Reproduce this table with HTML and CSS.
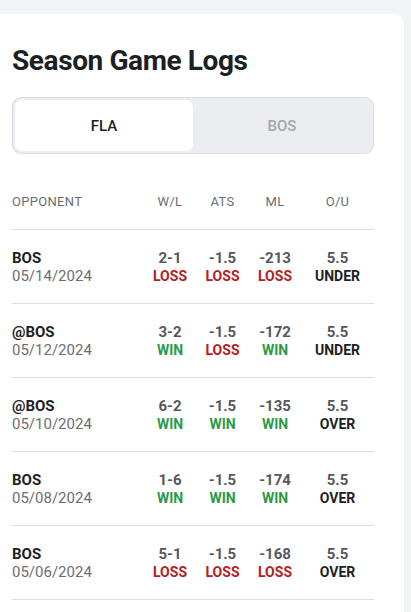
FILE: index.html
```html
<!DOCTYPE html>
<html lang="en">
<head>
<meta charset="utf-8">
<title>Season Game Logs</title>
<link rel="stylesheet" href="styles.css">
</head>
<body>
<div class="page">
  <section class="card">
    <h2 class="title">Season Game Logs</h2>
    <div class="tabs">
      <button class="tab active">FLA</button>
      <button class="tab">BOS</button>
    </div>
    <div class="table">
      <div class="row head">
        <div class="opp">OPPONENT</div>
        <div class="cell">W/L</div>
        <div class="cell">ATS</div>
        <div class="cell">ML</div>
        <div class="cell">O/U</div>
      </div>
      <div class="row">
        <div class="opp"><div class="team">BOS</div><div class="date">05/14/2024</div></div>
        <div class="cell"><div class="val">2-1</div><div class="res loss">LOSS</div></div>
        <div class="cell"><div class="val">-1.5</div><div class="res loss">LOSS</div></div>
        <div class="cell"><div class="val">-213</div><div class="res loss">LOSS</div></div>
        <div class="cell"><div class="val">5.5</div><div class="res ou">UNDER</div></div>
      </div>
      <div class="row">
        <div class="opp"><div class="team">@BOS</div><div class="date">05/12/2024</div></div>
        <div class="cell"><div class="val">3-2</div><div class="res win">WIN</div></div>
        <div class="cell"><div class="val">-1.5</div><div class="res loss">LOSS</div></div>
        <div class="cell"><div class="val">-172</div><div class="res win">WIN</div></div>
        <div class="cell"><div class="val">5.5</div><div class="res ou">UNDER</div></div>
      </div>
      <div class="row">
        <div class="opp"><div class="team">@BOS</div><div class="date">05/10/2024</div></div>
        <div class="cell"><div class="val">6-2</div><div class="res win">WIN</div></div>
        <div class="cell"><div class="val">-1.5</div><div class="res win">WIN</div></div>
        <div class="cell"><div class="val">-135</div><div class="res win">WIN</div></div>
        <div class="cell"><div class="val">5.5</div><div class="res ou">OVER</div></div>
      </div>
      <div class="row">
        <div class="opp"><div class="team">BOS</div><div class="date">05/08/2024</div></div>
        <div class="cell"><div class="val">1-6</div><div class="res win">WIN</div></div>
        <div class="cell"><div class="val">-1.5</div><div class="res win">WIN</div></div>
        <div class="cell"><div class="val">-174</div><div class="res win">WIN</div></div>
        <div class="cell"><div class="val">5.5</div><div class="res ou">OVER</div></div>
      </div>
      <div class="row">
        <div class="opp"><div class="team">BOS</div><div class="date">05/06/2024</div></div>
        <div class="cell"><div class="val">5-1</div><div class="res loss">LOSS</div></div>
        <div class="cell"><div class="val">-1.5</div><div class="res loss">LOSS</div></div>
        <div class="cell"><div class="val">-168</div><div class="res loss">LOSS</div></div>
        <div class="cell"><div class="val">5.5</div><div class="res ou">OVER</div></div>
      </div>
    </div>
  </section>
</div>
</body>
</html>
```
FILE: styles.css
```css
* { box-sizing: border-box; }
html, body {
  margin: 0;
  padding: 0;
  background: #f3f4f6;
  font-family: Roboto, "Liberation Sans", sans-serif;
  color: #1f2328;
  overflow: hidden;
}
.page {
  height: 612px;
  padding: 14px 7px 0 0;
}
.card {
  background: #ffffff;
  border-radius: 0 10px 0 0;
  height: 100%;
  padding: 0 30px 0 12px;
  box-shadow: 0 0 1px rgba(0,0,0,0.06);
}
.title {
  margin: 0;
  padding-top: 30px;
  font-size: 28px;
  line-height: 34px;
  font-weight: 700;
  letter-spacing: -0.4px;
  color: #1c1f23;
}
.tabs {
  margin-top: 19px;
  height: 57px;
  background: #ebedf0;
  border: 1px solid #dcdee2;
  border-radius: 9px;
  padding: 2px;
  display: grid;
  grid-template-columns: 178px 1fr;
}
.tab {
  border: 0;
  background: transparent;
  font-family: inherit;
  font-size: 15px;
  font-weight: 500;
  color: #a3a6ab;
  border-radius: 7px;
  padding: 0;
}
.tab.active {
  background: #ffffff;
  color: #1c1f23;
}
.table { margin-top: 29px; }
.row {
  display: grid;
  grid-template-columns: 132px 52px 53px 52px 1fr;
  align-items: center;
  height: 74px;
  border-bottom: 1px solid #dcdee2;
}
.row.head {
  height: 47px;
  align-items: start;
  padding-top: 10px;
  font-size: 13px;
  line-height: 16px;
  color: #6b6e73;
  letter-spacing: 0.3px;
}
.row > div { padding-top: 1px; }
.cell { text-align: center; }
.team {
  font-size: 15px;
  font-weight: 700;
  line-height: 18px;
  color: #1c1f23;
}
.date {
  font-size: 15px;
  line-height: 18px;
  color: #6b6e73;
}
.val {
  font-size: 15px;
  font-weight: 700;
  line-height: 18px;
  color: #55585c;
}
.res {
  font-size: 14px;
  font-weight: 700;
  line-height: 18px;
}
.res.loss { color: #b3211e; }
.res.win { color: #2a9a4a; }
.res.ou { color: #1c1f23; }
```
